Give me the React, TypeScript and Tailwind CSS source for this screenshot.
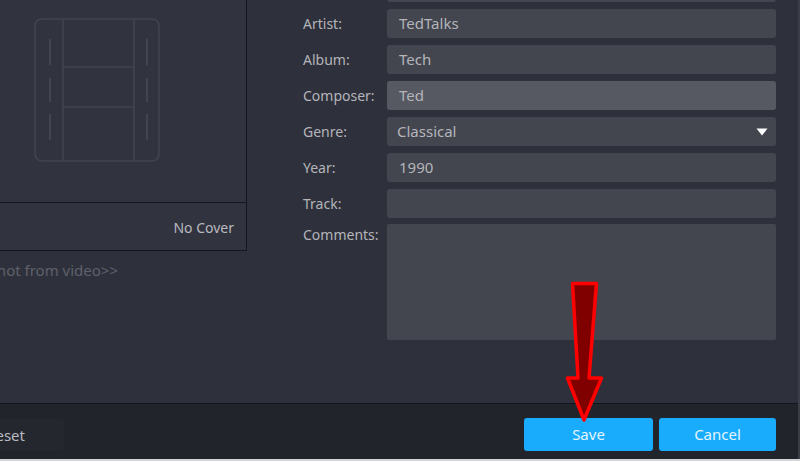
import React from "react";

const fields = [
  { label: "Artist:", value: "TedTalks" },
  { label: "Album:", value: "Tech" },
  { label: "Composer:", value: "Ted", active: true },
  { label: "Genre:", value: "Classical", select: true },
  { label: "Year:", value: "1990" },
  { label: "Track:", value: "" },
];

function FilmIcon() {
  return (
    <svg width="127" height="144" viewBox="0 0 127 144" fill="none" stroke="#42444e" strokeWidth="1.6">
      <rect x="1" y="1" width="124" height="142" rx="7" />
      <path d="M29 1V143M100 1V143M29 49H100M29 89H100" />
      <path d="M16 21V47M16 60V84M16 96V122M113 21V47M113 60V84M113 96V122" strokeWidth="2" />
    </svg>
  );
}

function Arrow() {
  return (
    <svg className="absolute left-[562px] top-[278px]" width="44" height="148" viewBox="0 0 44 148" fill="none">
      <path
        d="M10.500 5.500H34.500L27 100H39.500L22 142L5.500 100H16Z"
        fill="#800000"
        stroke="#ff0000"
        strokeWidth="3.500"
        strokeLinejoin="round"
      />
    </svg>
  );
}

export default function App() {
  return (
    <div className="relative flex h-[461px] w-[800px] flex-col overflow-hidden bg-[#2e303b] font-['Noto_Sans',sans-serif] text-[14px] text-[#b4b5ba]">
      <div className="flex h-[403px] shrink-0">
        {/* Cover */}
        <div className="w-[247px] shrink-0">
          <div className="h-[251px] border-r border-b border-[#16171e] bg-[#31333e]">
            <div className="flex h-[203px] items-start border-b border-[#16171e] pl-[34px] pt-[18px]">
              <FilmIcon />
            </div>
            <div className="flex h-[47px] items-center justify-end pr-[12px] pt-[2px] leading-none text-[#b9bac0]">No Cover</div>
          </div>
          <div className="mt-[10px] flex w-[118px] justify-end overflow-hidden whitespace-nowrap text-[15px] leading-[18px] text-[#5f616b]">
            Snapshot from video&gt;&gt;
          </div>
        </div>

        {/* Tags */}
        <div className="-mt-[27px] ml-[56px] flex w-[473px] flex-col gap-[7px]">
          <div className="ml-[84px] h-[29px] rounded-[3px] bg-[#43454f]" />
          {fields.map((f) => (
            <div key={f.label} className="flex h-[29px] items-center">
              <span className="w-[84px] shrink-0 leading-none">{f.label}</span>
              <div
                className={`flex h-full flex-1 items-center justify-between rounded-[3px] text-[15px] leading-none ${
                  f.active ? "bg-[#575962]" : "bg-[#43454f]"
                } ${f.select ? "pl-[10px] pr-[8px]" : "pl-[12px]"}`}
              >
                <span>{f.value}</span>
                {f.select && (
                  <svg width="12" height="8" viewBox="0 0 12 8">
                    <path d="M0.500 0.500H11.500L6 7.500Z" fill="#ffffff" />
                  </svg>
                )}
              </div>
            </div>
          ))}
          <div className="flex h-[116px] -mt-[1px] items-start">
            <span className="w-[84px] shrink-0 pt-[3px] leading-[16px]">Comments:</span>
            <div className="h-full flex-1 rounded-[2px] bg-[#43454f]" />
          </div>
        </div>
      </div>

      {/* Footer */}
      <div className="flex h-[56px] shrink-0 items-end justify-between border-t border-[#14151b] bg-[#22242c] pb-[8px] pr-[24px]">
        <div className="flex h-[32px] w-[64px] items-center justify-end rounded-r-[3px] bg-[#25272f] pr-[39px]">
          <div className="flex w-[25px] justify-end overflow-hidden text-[15px] leading-none text-[#b9bac0]">Reset</div>
        </div>
        <div className="flex gap-[6px]">
          <button className="flex h-[33px] w-[129px] items-center justify-center rounded-[3px] bg-[#19acfd] text-[15px] leading-none text-[#e4f4ff]">Save</button>
          <button className="flex h-[33px] w-[117px] items-center justify-center rounded-[3px] bg-[#19acfd] text-[15px] leading-none text-[#e4f4ff]">Cancel</button>
        </div>
      </div>
      <div className="h-[2px] bg-[#d5d5d8]" />
      <div className="absolute right-0 top-0 h-[459px] w-[2px] bg-[#3b3d47]" />
      <Arrow />
    </div>
  );
}
